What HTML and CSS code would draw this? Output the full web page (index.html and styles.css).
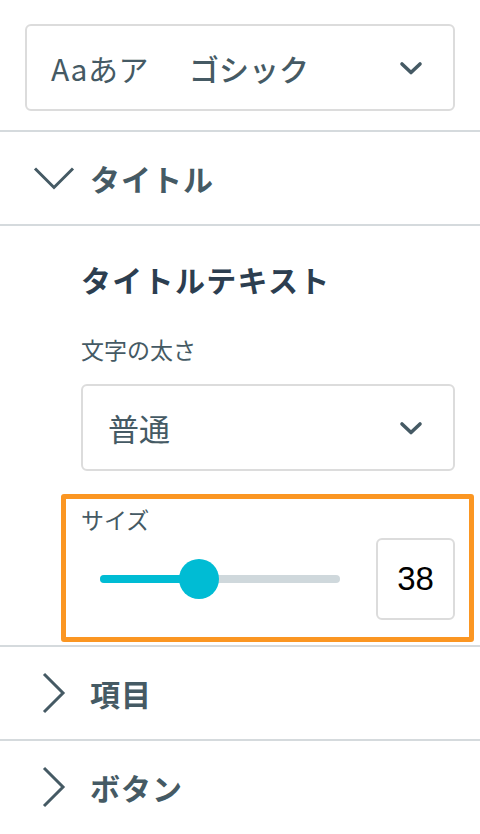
FILE: index.html
```html
<!DOCTYPE html>
<html lang="ja">
<head>
<meta charset="utf-8">
<link rel="stylesheet" href="styles.css">
</head>
<body>
<div class="panel">
  <div class="font-select-wrap">
    <div class="select font-select">
      <span class="select-text"><span class="font-sample">Aaあア</span><span class="font-name">ゴシック</span></span>
      <svg class="select-caret" width="24" height="14" viewBox="0 0 24 14"><polyline points="3,3 12,11.5 21,3" fill="none" stroke="#455a64" stroke-width="3.6" stroke-linecap="round" stroke-linejoin="round"/></svg>
    </div>
  </div>

  <div class="section-header">
    <svg class="acc-icon" width="48" height="48" viewBox="0 0 48 48"><polyline points="5,14.5 24,33.5 43,14.5" fill="none" stroke="#455a64" stroke-width="3"/></svg>
    <span class="section-name">タイトル</span>
  </div>

  <div class="section-body">
    <div class="group-title">タイトルテキスト</div>
    <div class="field-label">文字の太さ</div>
    <div class="select weight-select">
      <span class="select-text">普通</span>
      <svg class="select-caret" width="24" height="14" viewBox="0 0 24 14"><polyline points="3,3 12,11.5 21,3" fill="none" stroke="#455a64" stroke-width="3.6" stroke-linecap="round" stroke-linejoin="round"/></svg>
    </div>
    <div class="highlight">
      <div class="field-label size-label">サイズ</div>
      <div class="slider-row">
        <div class="slider">
          <div class="track"><div class="fill" style="width: 99px"></div></div>
          <div class="thumb" style="left: 79px"></div>
        </div>
        <div class="num-box">38</div>
      </div>
    </div>
  </div>

  <div class="section-header">
    <svg class="acc-icon" width="48" height="48" viewBox="0 0 48 48"><polyline points="14,5 33,24 14,43" fill="none" stroke="#455a64" stroke-width="3"/></svg>
    <span class="section-name">項目</span>
  </div>

  <div class="section-header">
    <svg class="acc-icon" width="48" height="48" viewBox="0 0 48 48"><polyline points="14,5 33,24 14,43" fill="none" stroke="#455a64" stroke-width="3"/></svg>
    <span class="section-name">ボタン</span>
  </div>
</div>
</body>
</html>
```

FILE: styles.css
```css
* { box-sizing: border-box; }

html, body {
  margin: 0;
  padding: 0;
  background: #ffffff;
  width: 480px;
  height: 834px;
  overflow: hidden;
}

body {
  font-family: "Noto Sans CJK JP", "Noto Sans", sans-serif;
  color: #455a64;
}

.font-select-wrap {
  padding: 24px 25px 19px 25px;
}

.select {
  display: flex;
  align-items: center;
  justify-content: space-between;
  height: 87px;
  border: 2px solid #dcdcdc;
  border-radius: 6px;
  background: #fff;
}

.font-select {
  padding: 0 30px 0 24px;
}

.font-select .select-text {
  display: flex;
  align-items: baseline;
  color: #455a64;
}

.font-sample {
  font-size: 30px;
  letter-spacing: 0.5px;
}

.font-name {
  margin-left: 40px;
  font-size: 30px;
  font-weight: 500;
  letter-spacing: 0;
}

.select-caret {
  display: block;
}

.section-header {
  display: flex;
  align-items: center;
  height: 94px;
  border-top: 2px solid #d5dadd;
  padding-left: 30px;
}

.acc-icon {
  display: block;
  flex: none;
}

.section-name {
  margin-left: 12px;
  font-size: 30px;
  font-weight: bold;
  color: #455a64;
  letter-spacing: 1px;
}

.section-body {
  border-top: 2px solid #d5dadd;
  padding: 33px 6px 3px 61px;
}

.group-title {
  margin-left: 20px;
  font-size: 30px;
  line-height: 40px;
  font-weight: bold;
  color: #2c3e50;
  letter-spacing: 1.3px;
}

.field-label {
  margin: 35px 0 0 20px;
  font-size: 23px;
  line-height: 30px;
  color: #455a64;
}

.weight-select {
  margin: 20px 19px 0 20px;
  padding: 0 30px 0 25px;
}

.weight-select .select-text {
  font-size: 31px;
  color: #455a64;
}

.highlight {
  margin-top: 23px;
  border: 5px solid #fb9622;
  border-radius: 3px;
  padding: 5px 14px 17px 15px;
}

.size-label {
  margin: 0;
}

.slider-row {
  display: flex;
  align-items: center;
  margin-top: 4px;
  padding-left: 19px;
  gap: 36px;
}

.slider {
  position: relative;
  width: 240px;
  height: 40px;
  display: flex;
  align-items: center;
}

.track {
  width: 240px;
  height: 8px;
  border-radius: 4px;
  background: #cfd8dc;
  overflow: hidden;
}

.fill {
  height: 100%;
  background: #00bcd4;
}

.thumb {
  position: absolute;
  top: 0;
  width: 40px;
  height: 40px;
  border-radius: 50%;
  background: #00bcd4;
}

.num-box {
  width: 79px;
  height: 82px;
  border: 2px solid #dcdcdc;
  border-radius: 6px;
  display: flex;
  align-items: center;
  justify-content: center;
  font-family: "Liberation Sans", Arial, sans-serif;
  font-size: 33px;
  color: #000;
}
```
